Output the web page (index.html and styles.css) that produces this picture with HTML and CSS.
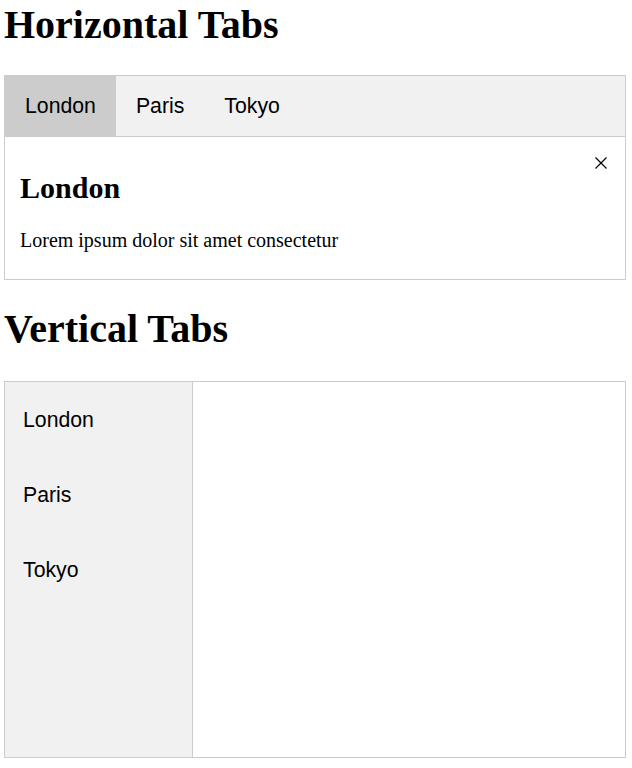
FILE: index.html
```html
<!DOCTYPE html>
<html>
<head>
<meta charset="utf-8">
<link rel="stylesheet" href="styles.css">
</head>
<body>
<h1 class="title first">Horizontal Tabs</h1>
<div class="htabs">
  <div class="tabbar">
    <button class="tab active">London</button>
    <button class="tab">Paris</button>
    <button class="tab">Tokyo</button>
  </div>
  <div class="hcontent">
    <span class="close"><svg width="14" height="14" viewBox="0 0 14 14"><path d="M1.5 1.5 L12.5 12.5 M12.5 1.5 L1.5 12.5" stroke="#000" stroke-width="1.2" fill="none"/></svg></span>
    <h3 class="city">London</h3>
    <p class="text">Lorem ipsum dolor sit amet consectetur</p>
  </div>
</div>
<h1 class="title second">Vertical Tabs</h1>
<div class="vtabs">
  <div class="vbar">
    <button class="vtab">London</button>
    <button class="vtab">Paris</button>
    <button class="vtab">Tokyo</button>
  </div>
  <div class="vcontent"></div>
</div>
</body>
</html>
```

FILE: styles.css
```css
html, body {
  background: #fff;
}
body {
  margin: 0 6px 0 4px;
  font-family: "Liberation Serif", "Times New Roman", serif;
  color: #000;
}
.title {
  font-family: "Liberation Serif", "Times New Roman", serif;
  font-size: 40px;
  font-weight: bold;
  line-height: 46px;
  margin: 0 0 29px;
}
.title.first {
  margin-top: 2px;
  margin-bottom: 27px;
}
.title.second {
  margin-top: 26px;
  margin-bottom: 29px;
}
.htabs {
  width: 622px;
}
.tabbar {
  display: flex;
  border: 1px solid #ccc;
  background: #f1f1f1;
}
.tab {
  font-family: "Liberation Sans", Arial, sans-serif;
  font-size: 21.25px;
  line-height: 24px;
  padding: 18px 20px 18px;
  border: none;
  background: transparent;
  color: #000;
  margin: 0;
}
.tab.active {
  background: #ccc;
}
.hcontent {
  border: 1px solid #ccc;
  border-top: none;
  padding: 8px 15px 7px;
}
.close {
  float: right;
  margin-top: 11px;
  margin-right: 2px;
  line-height: 0;
}
.city {
  font-size: 30px;
  font-weight: bold;
  line-height: 34px;
  margin: 26px 0 24px;
}
.text {
  font-size: 20px;
  line-height: 23px;
  margin: 0 0 20px;
}
.vtabs {
  display: flex;
  width: 622px;
  height: 377px;
}
.vbar {
  width: 187px;
  border: 1px solid #ccc;
  background: #f1f1f1;
  display: flex;
  flex-direction: column;
}
.vtab {
  font-family: "Liberation Sans", Arial, sans-serif;
  font-size: 21.25px;
  line-height: 23px;
  padding: 27px 18px 25px;
  border: none;
  background: transparent;
  color: #000;
  text-align: left;
  margin: 0;
}
.vcontent {
  flex: 1;
  border: 1px solid #ccc;
  border-left: none;
}
```
